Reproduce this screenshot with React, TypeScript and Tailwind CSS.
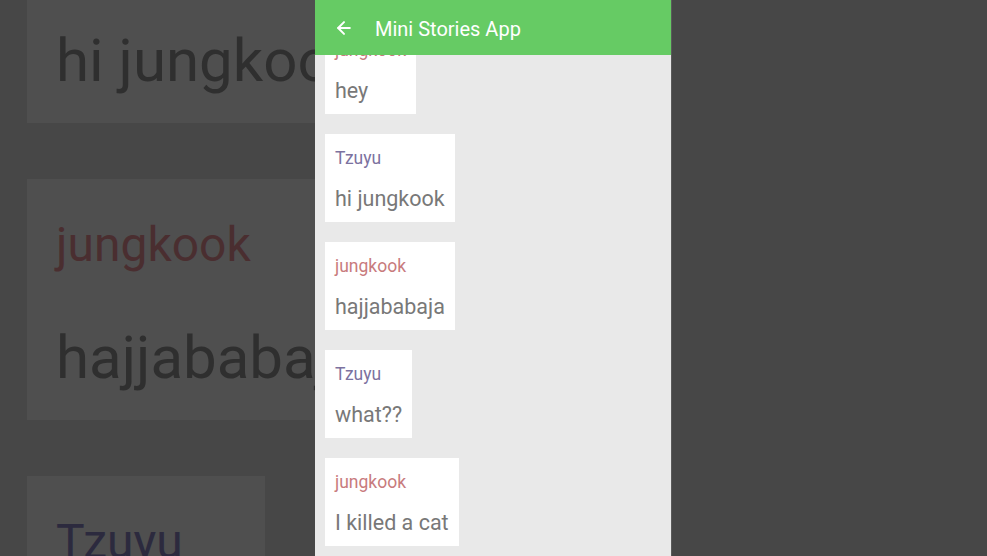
import { ArrowLeft } from "lucide-react";

interface Story {
  id: number;
  author: "Tzuyu" | "jungkook";
  text: string;
}

const stories: Story[] = [
  { id: 1, author: "jungkook", text: "hey" },
  { id: 2, author: "Tzuyu", text: "hi jungkook" },
  { id: 3, author: "jungkook", text: "hajjababaja" },
  { id: 4, author: "Tzuyu", text: "what??" },
  { id: 5, author: "jungkook", text: "I killed a cat" },
];

function PhoneCard({ story }: { story: Story }) {
  return (
    <div className="self-start h-[88px] bg-white px-[10px] pt-[12px]">
      <p
        className={
          story.author === "Tzuyu"
            ? "text-[17.5px] leading-[24px] text-[#7c72a0]"
            : "text-[17.5px] leading-[24px] text-[#c87b7d]"
        }
      >
        {story.author}
      </p>
      <p className="mt-[15px] text-[21.5px] leading-[28px] text-[#787878] whitespace-nowrap">
        {story.text}
      </p>
    </div>
  );
}

// the blurred, zoomed copy behind the phone on the left
function ZoomCard({ story }: { story: Story }) {
  return (
    <div className="self-start h-[241px] bg-[#4f4f4f] pl-[29px] pr-[22px] pt-[33px] shrink-0">
      <p
        className={
          story.author === "Tzuyu"
            ? "text-[48px] leading-[66px] text-[#2c2a3e]"
            : "text-[48px] leading-[66px] text-[#4a2e30]"
        }
      >
        {story.author}
      </p>
      <p className="mt-[42px] text-[60px] leading-[76px] text-[#2f2f2f] whitespace-nowrap">
        {story.text}
      </p>
    </div>
  );
}

export default function App() {
  return (
    <div
      className="flex h-[556px] w-[987px] overflow-hidden bg-[#474747]"
      style={{ fontFamily: "Roboto, 'Noto Sans', sans-serif" }}
    >
      <div className="w-[315px] shrink-0 overflow-hidden">
        <div className="flex flex-col gap-[56px] pl-[27px] mt-[-118px]">
          {stories.slice(1).map((s) => (
            <ZoomCard key={s.id} story={s} />
          ))}
        </div>
      </div>

      <div className="flex w-[357px] shrink-0 flex-col bg-[#e9e9e9] border-r border-[#5a5a5a]">
        <div className="flex h-[55px] shrink-0 items-center bg-[#66cb64] pl-[19px] z-10">
          <ArrowLeft size={20} strokeWidth={2.4} className="text-white mt-[1px]" />
          <span className="ml-[21px] mt-[3px] text-[20px] text-white">
            Mini Stories App
          </span>
        </div>
        <div className="flex-1 overflow-hidden">
          <div className="flex flex-col gap-[20px] pl-[10px] mt-[-29px]">
            {stories.map((s) => (
              <PhoneCard key={s.id} story={s} />
            ))}
          </div>
        </div>
      </div>

      <div className="flex-1" />
    </div>
  );
}
